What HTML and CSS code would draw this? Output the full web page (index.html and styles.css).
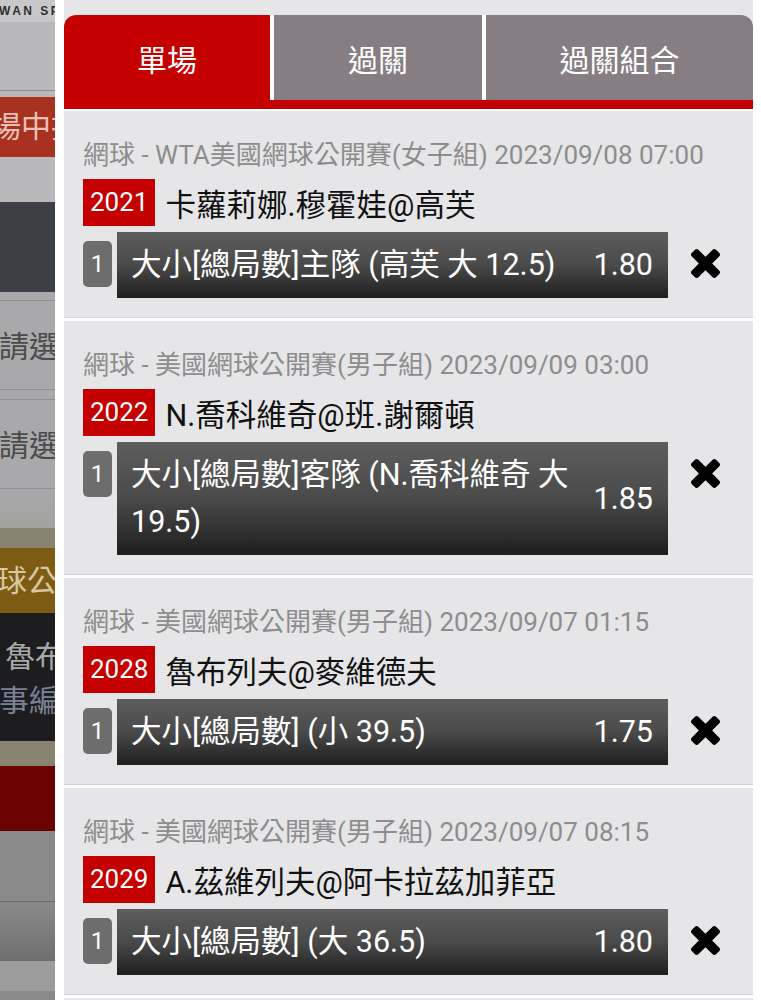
FILE: index.html
```html
<!DOCTYPE html>
<html lang="zh-Hant">
<head>
    <meta charset="UTF-8">
    <meta name="viewport" content="width=device-width, initial-scale=1.0">
    <title>投注單</title>
    <link rel="stylesheet" href="styles.css">
</head>
<body>
    <div class="page">
        <!-- Página de fondo atenuada -->
        <aside class="backdrop">
            <div class="bd bd-brand">WAN SPORTS</div>
            <div class="bd bd-light h68"></div>
            <div class="bd-line"></div>
            <div class="bd bd-light h6"></div>
            <div class="bd bd-red">場中投注</div>
            <div class="bd bd-light h45"></div>
            <div class="bd bd-slate"></div>
            <div class="bd bd-mid h8"></div>
            <div class="bd-line"></div>
            <div class="bd bd-mid bd-select">請選擇</div>
            <div class="bd-line"></div>
            <div class="bd bd-mid h9"></div>
            <div class="bd-line"></div>
            <div class="bd bd-mid bd-select">請選擇</div>
            <div class="bd-line"></div>
            <div class="bd bd-pale h39"></div>
            <div class="bd bd-olive h20"></div>
            <div class="bd bd-gold">網球公開賽</div>
            <div class="bd bd-black">
                <div class="bd-team">魯布列夫</div>
                <div class="bd-note">賽事編號</div>
            </div>
            <div class="bd bd-olive h25"></div>
            <div class="bd bd-wine"></div>
            <div class="bd bd-gray h70"></div>
            <div class="bd-line bd-line-dark"></div>
            <div class="bd bd-fade"></div>
            <div class="bd bd-silver h30"></div>
            <div class="bd bd-gray h10"></div>
        </aside>

        <!-- Panel del boleto -->
        <main class="slip">
            <div class="slip-head">
                <div class="tabs">
                    <div class="tab active">單場</div>
                    <div class="tab">過關</div>
                    <div class="tab">過關組合</div>
                </div>
                <div class="tab-bar"></div>
            </div>

            <div class="ticket">
                <div class="league">網球 - WTA美國網球公開賽(女子組) 2023/09/08 07:00</div>
                <div class="match">
                    <span class="match-no">2021</span>
                    <span class="match-name">卡蘿莉娜.穆霍娃@高芙</span>
                </div>
                <div class="bet">
                    <div class="bet-idx">1</div>
                    <div class="bet-box">
                        <div class="bet-text">大小[總局數]主隊 (高芙 大 12.5)</div>
                        <div class="bet-odds">1.80</div>
                    </div>
                    <svg class="bet-remove" viewBox="110 286 1188 1188"><path d="M1298 1242q0 40-28 68l-136 136q-28 28-68 28t-68-28l-294-294-294 294q-28 28-68 28t-68-28l-136-136q-28-28-28-68t28-68l294-294-294-294q-28-28-28-68t28-68l136-136q28-28 68-28t68 28l294 294 294-294q28-28 68-28t68 28l136 136q28 28 28 68t-28 68l-294 294 294 294q28 28 28 68z"/></svg>
                </div>
            </div>

            <div class="ticket">
                <div class="league">網球 - 美國網球公開賽(男子組) 2023/09/09 03:00</div>
                <div class="match">
                    <span class="match-no">2022</span>
                    <span class="match-name">N.喬科維奇@班.謝爾頓</span>
                </div>
                <div class="bet">
                    <div class="bet-idx">1</div>
                    <div class="bet-box">
                        <div class="bet-text">大小[總局數]客隊 (N.喬科維奇 大 19.5)</div>
                        <div class="bet-odds">1.85</div>
                    </div>
                    <svg class="bet-remove" viewBox="110 286 1188 1188"><path d="M1298 1242q0 40-28 68l-136 136q-28 28-68 28t-68-28l-294-294-294 294q-28 28-68 28t-68-28l-136-136q-28-28-28-68t28-68l294-294-294-294q-28-28-28-68t28-68l136-136q28-28 68-28t68 28l294 294 294-294q28-28 68-28t68 28l136 136q28 28 28 68t-28 68l-294 294 294 294q28 28 28 68z"/></svg>
                </div>
            </div>

            <div class="ticket">
                <div class="league">網球 - 美國網球公開賽(男子組) 2023/09/07 01:15</div>
                <div class="match">
                    <span class="match-no">2028</span>
                    <span class="match-name">魯布列夫@麥維德夫</span>
                </div>
                <div class="bet">
                    <div class="bet-idx">1</div>
                    <div class="bet-box">
                        <div class="bet-text">大小[總局數] (小 39.5)</div>
                        <div class="bet-odds">1.75</div>
                    </div>
                    <svg class="bet-remove" viewBox="110 286 1188 1188"><path d="M1298 1242q0 40-28 68l-136 136q-28 28-68 28t-68-28l-294-294-294 294q-28 28-68 28t-68-28l-136-136q-28-28-28-68t28-68l294-294-294-294q-28-28-28-68t28-68l136-136q28-28 68-28t68 28l294 294 294-294q28-28 68-28t68 28l136 136q28 28 28 68t-28 68l-294 294 294 294q28 28 28 68z"/></svg>
                </div>
            </div>

            <div class="ticket">
                <div class="league">網球 - 美國網球公開賽(男子組) 2023/09/07 08:15</div>
                <div class="match">
                    <span class="match-no">2029</span>
                    <span class="match-name">A.茲維列夫@阿卡拉茲加菲亞</span>
                </div>
                <div class="bet">
                    <div class="bet-idx">1</div>
                    <div class="bet-box">
                        <div class="bet-text">大小[總局數] (大 36.5)</div>
                        <div class="bet-odds">1.80</div>
                    </div>
                    <svg class="bet-remove" viewBox="110 286 1188 1188"><path d="M1298 1242q0 40-28 68l-136 136q-28 28-68 28t-68-28l-294-294-294 294q-28 28-68 28t-68-28l-136-136q-28-28-28-68t28-68l294-294-294-294q-28-28-28-68t28-68l136-136q28-28 68-28t68 28l294 294 294-294q28-28 68-28t68 28l136 136q28 28 28 68t-28 68l-294 294 294 294q28 28 28 68z"/></svg>
                </div>
            </div>

            <div class="ticket">
                <div class="league">網球 - 美國網球公開賽(男子組) 2023/09/07 10:00</div>
            </div>
        </main>
    </div>
</body>
</html>
```

FILE: styles.css
```css
body {
    margin: 0;
    height: 1000px;
    overflow: hidden;
    background-color: #fff;
    font-family: Roboto, "Noto Sans CJK TC", sans-serif;
}

.page {
    display: flex;
}

/* Fondo atenuado a la izquierda */
.backdrop {
    width: 55px;
    flex: none;
    display: flex;
    flex-direction: column;
    overflow: hidden;
}

.bd {
    flex: none;
    white-space: nowrap;
    overflow: hidden;
}

.bd-line {
    height: 1px;
    background-color: #8f8f91;
}

.bd-line-dark {
    background-color: #6a6a6a;
}

.h6 { height: 6px; }
.h8 { height: 8px; }
.h9 { height: 9px; }
.h10 { height: 10px; }
.h20 { height: 20px; }
.h25 { height: 25px; }
.h30 { height: 30px; }
.h39 { height: 39px; }
.h45 { height: 45px; }
.h68 { height: 68px; }
.h70 { height: 70px; }

.bd-brand {
    height: 22px;
    line-height: 22px;
    background-color: #c8c8ca;
    color: #2e2e2e;
    font-family: "Liberation Sans", sans-serif;
    font-weight: bold;
    font-size: 12px;
    letter-spacing: 2.5px;
    text-indent: -1px;
}

.bd-light {
    background-color: #b9b9bb;
}

.bd-mid {
    background-color: #a9a9ab;
}

.bd-pale {
    background: linear-gradient(#a9a9ab, #a2a29f);
}

.bd-red {
    height: 60px;
    line-height: 60px;
    background-color: #a8311f;
    color: #e8c2b8;
    font-size: 30px;
    text-indent: -9px;
}

.bd-slate {
    height: 90px;
    background-color: #3c3f45;
}

.bd-select {
    height: 88px;
    line-height: 92px;
    color: #4b4b4b;
    font-size: 30px;
    text-indent: -1px;
}

.bd-olive {
    background-color: #88846f;
}

.bd-gold {
    height: 65px;
    line-height: 65px;
    background-color: #7e5b12;
    color: #d8c7a0;
    font-size: 30px;
    text-indent: -33px;
}

.bd-black {
    height: 128px;
    padding-top: 22px;
    box-sizing: border-box;
    background-color: #1d1d1f;
    font-size: 30px;
    line-height: 44px;
}

.bd-team {
    color: #a8a8a8;
    text-indent: 5px;
}

.bd-note {
    color: #7a8192;
    text-indent: -31px;
}

.bd-wine {
    height: 65px;
    background-color: #6a0202;
}

.bd-gray {
    background-color: #8a8a8a;
}

.bd-fade {
    height: 59px;
    background: linear-gradient(#8a8a8a, #6f6f6f);
}

.bd-silver {
    background-color: #9c9c9c;
}

/* Panel del boleto */
.slip {
    width: 689px;
    flex: none;
    margin-left: 9px;
}

.slip-head {
    padding-top: 15px;
    background-color: #e6e6e8;
}

.tabs {
    display: grid;
    grid-template-columns: 206px 208px 1fr;
    gap: 4px;
    height: 85px;
    background-color: #fff;
    border-radius: 12px 12px 0 0;
    overflow: hidden;
}

.tab {
    display: flex;
    align-items: center;
    justify-content: center;
    background-color: #877e83;
    color: #fff;
    font-size: 30px;
}

.tab.active {
    background-color: #c40000;
}

.tab-bar {
    height: 9px;
    background-color: #c40000;
    border-bottom: 2px solid #fff;
}

.ticket {
    padding: 26px 33px 19px 19px;
    margin-bottom: 3px;
    background-color: #e6e6e8;
    border-bottom: 1px solid #d3d3d5;
}

.league {
    font-size: 26px;
    line-height: 36px;
    color: #8d8d8d;
    white-space: nowrap;
}

.match {
    display: flex;
    align-items: center;
    height: 47px;
    margin-top: 6px;
}

.match-no {
    padding: 0 7px;
    background-color: #c40000;
    color: #fff;
    font-size: 26px;
    line-height: 47px;
}

.match-name {
    margin-left: 10px;
    color: #111;
    font-size: 30.5px;
    white-space: nowrap;
}

.bet {
    display: flex;
    align-items: flex-start;
    margin-top: 6px;
}

.bet-idx {
    flex: none;
    display: flex;
    align-items: center;
    justify-content: center;
    width: 29px;
    height: 46px;
    margin-top: 9px;
    border-radius: 5px;
    background-color: #6d6d6d;
    color: #fff;
    font-size: 24px;
}

.bet-box {
    flex: 1;
    display: flex;
    margin-left: 5px;
    padding: 9px 15px 10px 14px;
    background: linear-gradient(#5d5d5d, #4a4a4a 50%, #1e1e1e);
    color: #fff;
    font-size: 30.5px;
    line-height: 47px;
}

.bet-text {
    flex: 1;
}

.bet-odds {
    align-self: center;
    margin-left: 12px;
}

.bet-remove {
    flex: none;
    width: 29px;
    height: 29px;
    margin: 17px 0 0 23px;
    fill: #000;
}
```
